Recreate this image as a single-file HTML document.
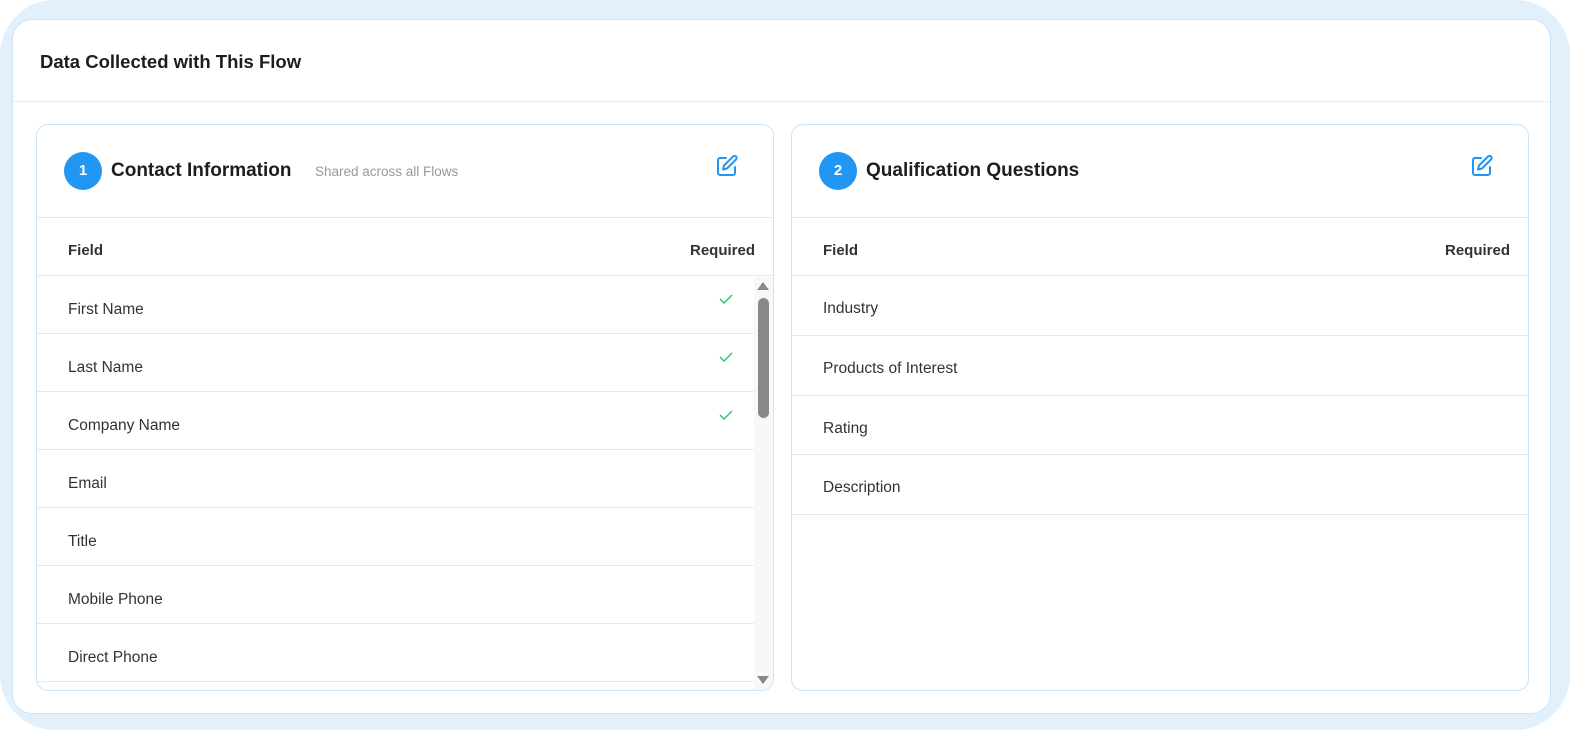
<!DOCTYPE html>
<html><head><style>
*{box-sizing:border-box;margin:0;padding:0}
body{width:1570px;height:730px;background:#fff;font-family:"Liberation Sans",Roboto,sans-serif;overflow:hidden;position:relative}
.bg{position:absolute;left:0;top:0;width:1570px;height:730px;background:#e2f0fc;border-radius:55px}
.card{position:absolute;left:12px;top:19px;width:1539px;height:695px;background:#fff;border:1px solid #cde3f6;border-radius:20px;overflow:hidden}
.title{position:absolute;left:27px;top:31px;font-size:18.5px;font-weight:bold;color:#1d1d1d}
.hl{position:absolute;left:0;right:0;top:81px;height:1px;background:#e8edf1}
.panel{position:absolute;top:104px;width:738px;height:567px;border:1px solid #cde3f6;border-radius:12px;overflow:hidden}
.ph{height:93px;border-bottom:1px solid #e6eaee;position:relative}
.num{position:absolute;left:27px;top:27px;width:38px;height:38px;border-radius:50%;background:#2196f3;color:#fff;font-weight:bold;font-size:15px;text-align:center;line-height:38px}
.pt{position:absolute;left:74px;top:35px;font-size:19px;font-weight:bold;color:#1d1d1d}
.sub{position:absolute;left:278px;top:39px;font-size:13.5px;color:#999}
.edit{position:absolute;right:34px;top:29px}
.th{height:58px;border-bottom:1px solid #e6eaee;position:relative;font-size:15px;font-weight:bold;color:#333}
.th span{position:absolute;top:24px}
.row{border-bottom:1px solid #e6eaee;position:relative;font-size:15.5px;color:#333}
.row span{position:absolute;left:31px}
.chk{position:absolute;left:682px;top:18px}
</style></head><body>
<div class="bg"></div>
<div class="card">
<div class="title">Data Collected with This Flow</div>
<div class="hl"></div>
<div class="panel" style="left:23px">
 <div class="ph"><div class="num">1</div><div class="pt">Contact Information</div><div class="sub">Shared across all Flows</div>
 <svg class="edit" width="24" height="24" viewBox="0 0 24 24" fill="none" stroke="#2196f3" stroke-width="2" stroke-linecap="round" stroke-linejoin="round"><path d="M11 4H5a2 2 0 0 0-2 2v13a2 2 0 0 0 2 2h13a2 2 0 0 0 2-2v-6"/><path d="M18 2.5a2.1 2.1 0 0 1 3 3L12 14.5l-4 1 1-4z"/></svg></div>
 <div class="th"><span style="left:31px">Field</span><span style="right:18px">Required</span></div>
 <div style="position:absolute;left:717px;top:152px;width:19px;height:414px;background:#f8f8f8"></div>
 <div style="position:absolute;left:720px;top:157px;width:0;height:0;border-left:6px solid transparent;border-right:6px solid transparent;border-bottom:8px solid #888"></div>
 <div style="position:absolute;left:721px;top:173px;width:11px;height:120px;background:#888;border-radius:6px"></div>
 <div style="position:absolute;left:720px;top:551px;width:0;height:0;border-left:6px solid transparent;border-right:6px solid transparent;border-top:8px solid #888"></div>
 <div style="width:717px">
 <div class="row" style="height:58px"><span style="top:25px">First Name</span><svg class="chk" width="14" height="10" viewBox="0 0 14 10"><path d="M1 5l4 4 8-8" fill="none" stroke="#2ecc71" stroke-width="1.5"/></svg></div>
 <div class="row" style="height:58px"><span style="top:25px">Last Name</span><svg class="chk" width="14" height="10" viewBox="0 0 14 10"><path d="M1 5l4 4 8-8" fill="none" stroke="#2ecc71" stroke-width="1.5"/></svg></div>
 <div class="row" style="height:58px"><span style="top:25px">Company Name</span><svg class="chk" width="14" height="10" viewBox="0 0 14 10"><path d="M1 5l4 4 8-8" fill="none" stroke="#2ecc71" stroke-width="1.5"/></svg></div>
 <div class="row" style="height:58px"><span style="top:25px">Email</span></div>
 <div class="row" style="height:58px"><span style="top:25px">Title</span></div>
 <div class="row" style="height:58px"><span style="top:25px">Mobile Phone</span></div>
 <div class="row" style="height:58px"><span style="top:25px">Direct Phone</span></div>
 </div>
</div>
<div class="panel" style="left:778px">
 <div class="ph"><div class="num">2</div><div class="pt">Qualification Questions</div>
 <svg class="edit" width="24" height="24" viewBox="0 0 24 24" fill="none" stroke="#2196f3" stroke-width="2" stroke-linecap="round" stroke-linejoin="round"><path d="M11 4H5a2 2 0 0 0-2 2v13a2 2 0 0 0 2 2h13a2 2 0 0 0 2-2v-6"/><path d="M18 2.5a2.1 2.1 0 0 1 3 3L12 14.5l-4 1 1-4z"/></svg></div>
 <div class="th"><span style="left:31px">Field</span><span style="right:18px">Required</span></div>
 <div class="row" style="height:60px"><span style="top:24px">Industry</span></div>
 <div class="row" style="height:60px"><span style="top:24px">Products of Interest</span></div>
 <div class="row" style="height:59px"><span style="top:24px">Rating</span></div>
 <div class="row" style="height:60px"><span style="top:24px">Description</span></div>
</div>
</div>
</body></html>
